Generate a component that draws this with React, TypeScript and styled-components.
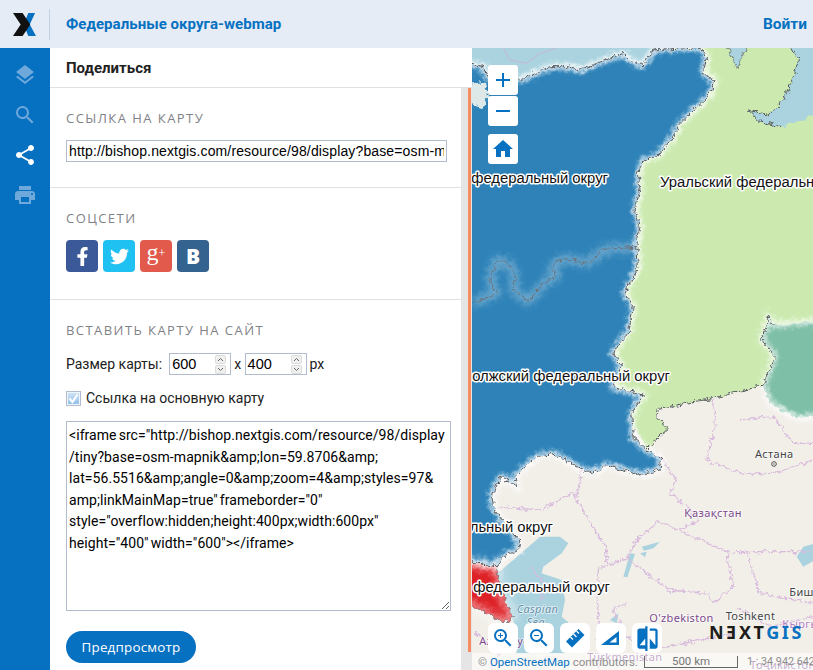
import styled, { createGlobalStyle } from 'styled-components';
import {
  MdAdd,
  MdCompare,
  MdHome,
  MdLayers,
  MdPrint,
  MdRemove,
  MdSearch,
  MdShare,
  MdZoomIn,
  MdZoomOut,
} from 'react-icons/md';
import { FaFacebookF, FaTwitter } from 'react-icons/fa';

const EMBED_CODE = [
  '<iframe src="http://bishop.nextgis.com/resource/98/display',
  '/tiny?base=osm-mapnik&amp;lon=59.8706&amp;',
  'lat=56.5516&amp;angle=0&amp;zoom=4&amp;styles=97&',
  'amp;linkMainMap=true" frameborder="0"',
  'style="overflow:hidden;height:400px;width:600px"',
  'height="400" width="600"></iframe>',
].join('\n');

const GlobalStyle = createGlobalStyle`
  html, body {
    margin: 0;
    padding: 0;
    height: 100%;
    overflow: hidden;
  }
  body {
    font-family: Roboto, "Liberation Sans", sans-serif;
    font-size: 14px;
    color: #212121;
  }
`;

const Page = styled.div`
  width: 813px;
  height: 670px;
  display: flex;
  flex-direction: column;
  overflow: hidden;
`;

const Header = styled.header`
  height: 48px;
  flex: none;
  display: flex;
  align-items: center;
  background: #e5ecf5;
`;

const LogoCell = styled.div`
  width: 49px;
  height: 31px;
  display: flex;
  align-items: center;
  justify-content: center;
  border-right: 1px solid #bcd3ea;
  box-sizing: content-box;
`;

const Title = styled.div`
  margin-left: 16px;
  font-size: 15px;
  font-weight: 700;
  letter-spacing: 0.05px;
  color: #0670c1;
  flex: 1;
`;

const Login = styled.a`
  margin-right: 6px;
  font-size: 15.5px;
  font-weight: 700;
  color: #0670c1;
`;

const Main = styled.div`
  flex: 1;
  display: flex;
  min-height: 0;
`;

const Nav = styled.nav`
  width: 50px;
  flex: none;
  background: #0670c1;
  display: flex;
  flex-direction: column;
  align-items: center;
  padding-top: 15px;
  gap: 16px;
  box-sizing: border-box;
`;

const NavIcon = styled.div<{ $active?: boolean }>`
  width: 24px;
  height: 24px;
  font-size: 24px;
  line-height: 0;
  color: ${(p) => (p.$active ? '#ffffff' : '#6fa9dc')};
`;

const Panel = styled.div`
  width: 422px;
  flex: none;
  display: flex;
  flex-direction: column;
  background: #fff;
`;

const PanelTitle = styled.div`
  height: 38px;
  flex: none;
  padding: 1px 0 0 16px;
  display: flex;
  align-items: center;
  font-size: 15px;
  font-weight: 700;
  color: #212121;
  border-bottom: 1px solid #e0e0e0;
`;

const PanelBody = styled.div`
  flex: 1;
  display: flex;
  min-height: 0;
`;

const Sections = styled.div`
  width: 411px;
  flex: none;
  overflow: hidden;
`;

const ScrollTrack = styled.div`
  width: 11px;
  flex: none;
  background: #e5e5e5;
  display: flex;
  justify-content: flex-end;
  padding-right: 1px;
  box-sizing: border-box;
`;

const ScrollThumb = styled.div`
  width: 3px;
  height: 564px;
  background: #f58c62;
`;

const Section = styled.section<{ $height: number }>`
  height: ${(p) => p.$height}px;
  box-sizing: border-box;
  padding: 22px 10px 0 16px;
  border-bottom: 1px solid #e0e0e0;

  &:last-child {
    border-bottom: none;
  }
`;

const SectionTitle = styled.h3`
  margin: 0 0 14px;
  font-family: 'Open Sans', sans-serif;
  font-size: 13px;
  line-height: 16px;
  font-weight: 400;
  letter-spacing: 1.45px;
  color: #7f8287;
`;

const LinkInput = styled.input`
  display: block;
  width: 381px;
  height: 22px;
  box-sizing: border-box;
  border: 1px solid #b3bbcf;
  padding: 0 2px;
  font-family: 'Liberation Sans', sans-serif;
  font-size: 14px;
  letter-spacing: 0.14px;
  color: #000;
  outline: none;
`;

const SocialRow = styled.div`
  display: flex;
  gap: 5px;
`;

const SocialButton = styled.a<{ $color: string }>`
  width: 32px;
  height: 32px;
  border-radius: 4px;
  background: ${(p) => p.$color};
  color: #fff;
  display: flex;
  align-items: center;
  justify-content: center;
  font-size: 19px;
`;

const GooglePlus = styled.span`
  font-family: 'Liberation Serif', serif;
  font-size: 24px;
  line-height: 24px;
  margin-top: -7px;

  small {
    font-size: 12px;
    vertical-align: 3px;
  }
`;

const VkLetter = styled.span`
  font-family: 'Open Sans', sans-serif;
  font-weight: 800;
  font-size: 21px;
`;

const SizeRow = styled.div`
  display: flex;
  align-items: center;
  height: 22px;
  margin-top: 15px;
  font-size: 14px;
`;

const SizeLabel = styled.span<{ $left?: number; $right?: number }>`
  margin: 0 ${(p) => p.$right || 0}px 0 ${(p) => p.$left || 0}px;
`;

const Spin = styled.div`
  width: 62px;
  height: 22px;
  box-sizing: border-box;
  border: 1px solid #b3bbcf;
  display: flex;
  align-items: center;
  justify-content: space-between;
  padding: 0 4px 0 2px;
  font-size: 14.5px;
  color: #000;
  font-family: 'Liberation Sans', sans-serif;
`;

const SpinButtons = styled.div`
  width: 11px;
  display: flex;
  flex-direction: column;
  gap: 1px;
`;

const SpinButton = styled.div`
  height: 9px;
  background: #f0f0f0;
  border: 1px solid #dcdcdc;
  box-sizing: border-box;
  border-radius: 2px;
  display: flex;
  align-items: center;
  justify-content: center;
`;

const CheckRow = styled.label`
  display: flex;
  align-items: center;
  gap: 5px;
  margin-top: 14px;
  height: 18px;
  font-size: 14px;
`;

const CheckBox = styled.span`
  width: 15px;
  height: 15px;
  box-sizing: border-box;
  border: 1px solid #b3bbcf;
  background: linear-gradient(#d3e5f6, #8fbee8);
  box-shadow: inset 0 0 0 1px #eef5fb;
  display: flex;
  align-items: center;
  justify-content: center;
`;

const CodeArea = styled.textarea`
  display: block;
  width: 385px;
  height: 190px;
  margin-top: 14px;
  box-sizing: border-box;
  border: 1px solid #b3bbcf;
  padding: 3px 2px;
  font-family: Roboto, sans-serif;
  font-size: 14px;
  line-height: 21.5px;
  letter-spacing: 0.06px;
  word-spacing: -1.5px;
  white-space: pre;
  color: #000;
  outline: none;
  overflow: hidden;
`;

const PreviewButton = styled.button`
  display: block;
  margin-top: 20px;
  width: 130px;
  height: 32px;
  border: none;
  border-radius: 16px;
  background: #0670c1;
  color: #fff;
  font-family: 'Open Sans', sans-serif;
  font-size: 13.4px;
  letter-spacing: 0.2px;
`;

const MapPane = styled.div`
  position: relative;
  flex: 1;
  overflow: hidden;
  background: #f2efe9;
`;

const MapCanvas = styled.svg`
  display: block;
  width: 341px;
  height: 622px;
`;

const RegionLabel = styled.text`
  font-family: 'Liberation Sans', sans-serif;
  font-size: 44.5px;
  fill: #111;
  stroke: #fff;
  stroke-width: 9px;
  stroke-linejoin: round;
  paint-order: stroke;
`;

const PlaceLabel = styled.text<{ $color?: string; $italic?: boolean }>`
  font-family: 'Noto Sans', sans-serif;
  font-size: 33px;
  font-style: ${(p) => (p.$italic ? 'italic' : 'normal')};
  fill: ${(p) => p.$color || '#444'};
  stroke: #ffffffb0;
  stroke-width: 5px;
  paint-order: stroke;
  letter-spacing: 1px;
`;

const ZoomStack = styled.div`
  position: absolute;
  left: 16px;
  top: 17px;
  display: flex;
  flex-direction: column;
  gap: 1px;
`;

const MapButton = styled.div<{ $spaced?: boolean }>`
  width: 30px;
  height: 30px;
  margin-top: ${(p) => (p.$spaced ? 7 : 0)}px;
  border-radius: 3px;
  background: #fff;
  color: #0670c1;
  display: flex;
  align-items: center;
  justify-content: center;
  font-size: 24px;
`;

const ToolBar = styled.div`
  position: absolute;
  left: 16px;
  top: 575px;
  display: flex;
  gap: 6px;
`;

const ToolButton = styled(MapButton)<{ $big?: boolean }>`
  border-radius: 6px;
  font-size: ${(p) => (p.$big ? 27 : 24)}px;
`;

const NextLogo = styled.div`
  position: absolute;
  right: 9px;
  top: 574px;
  font-family: 'Noto Sans', 'DejaVu Sans', sans-serif;
  font-weight: 700;
  font-size: 18px;
  line-height: 20px;
  letter-spacing: 2.6px;
  color: #1d1d1b;
  white-space: nowrap;

  span {
    color: #0670c1;
  }
`;

const BottomBar = styled.div`
  position: absolute;
  left: 0;
  right: 0;
  bottom: 0;
  height: 17px;
  padding-left: 6px;
  background: rgba(255, 255, 255, 0.55);
  display: flex;
  align-items: center;
  font-size: 11.5px;
  color: #8d8d8d;
  white-space: nowrap;
`;

const Attribution = styled.div`
  width: 166px;
  flex: none;

  a {
    color: #0670c1;
  }
`;

const ScaleBar = styled.div`
  width: 94px;
  height: 12px;
  flex: none;
  box-sizing: border-box;
  border: 1px solid #666;
  border-top: none;
  line-height: 11px;
  text-align: center;
  color: #777;
`;

const Ratio = styled.div`
  margin-left: 9px;
  font-size: 10.8px;
`;

type Pt = [number, number];

const pts = (list: Pt[]) => list.map((p) => p.join(',')).join(' ');

// map shapes, in 3x units of the reference (x from 96, y from 144)
const BLUE: Pt[] = [
  [60, 185], [130, 200], [145, 232], [240, 240], [330, 200], [385, 200], [420, 210], [470, 190],
  [550, 160], [575, 185], [610, 195], [640, 150], [780, 140], [800, 170], [790, 220], [825, 240],
  [810, 285], [720, 370], [700, 410], [650, 470], [610, 480], [595, 520], [600, 570], [585, 630],
  [600, 680], [590, 735], [595, 800], [555, 880], [580, 920], [565, 1000], [545, 1020], [520, 1060],
  [545, 1100], [520, 1160], [610, 1185], [575, 1240], [580, 1310], [620, 1350], [665, 1375],
  [660, 1410], [600, 1425], [500, 1395], [460, 1420], [420, 1405], [340, 1360], [290, 1370],
  [225, 1430], [230, 1460], [185, 1430], [155, 1485], [160, 1520], [200, 1580], [235, 1620],
  [240, 1645], [185, 1675], [170, 1700], [60, 1680],
];

const RED: Pt[] = [
  [60, 1680], [170, 1700], [185, 1780], [220, 1850], [190, 1870], [130, 1835], [60, 1800],
];

const GREEN: Pt[] = [
  [700, 130], [860, 130], [890, 205], [925, 130], [1045, 130], [1075, 180], [1060, 230],
  [1030, 300], [990, 345], [925, 330], [960, 365], [1020, 380], [1160, 335], [1160, 980],
  [1000, 975], [985, 950], [970, 1020], [1005, 1070], [970, 1155], [820, 1195], [655, 1225],
  [650, 1255], [685, 1285], [620, 1345], [560, 1240], [500, 1100], [500, 700],
];

const TEAL: Pt[] = [
  [1160, 960], [1000, 975], [985, 950], [965, 1020], [1005, 1070], [970, 1155], [990, 1210],
  [1070, 1255], [1160, 1245],
];

const INNER_LINE: Pt[] = [
  [590, 742], [490, 748], [470, 770], [440, 790], [370, 775], [335, 800], [350, 830], [310, 850],
  [265, 905], [220, 870], [225, 820], [205, 790], [170, 780], [150, 840], [170, 880], [100, 910],
];

const CASPIAN: Pt[] = [
  [185, 1710], [300, 1610], [360, 1610], [385, 1630], [365, 1660], [310, 1700], [305, 1720],
  [365, 1740], [375, 1800], [365, 1850], [400, 1880], [420, 1940], [390, 1960], [230, 1960],
  [225, 1880], [190, 1780], [170, 1720],
];

const LAKES: Pt[][] = [
  [[550, 1730], [570, 1660], [585, 1662], [562, 1732]],
  [[605, 1640], [660, 1625], [640, 1645], [612, 1652]],
  [[600, 1660], [620, 1655], [615, 1672]],
  [[1160, 1620], [1090, 1640], [1070, 1670], [1090, 1700], [1160, 1660]],
  [[510, 1860], [535, 1840], [530, 1870]],
];

const BORDERS: Pt[][] = [
  [[160, 1520], [300, 1530], [400, 1480], [470, 1600], [500, 1640], [500, 1690]],
  [[425, 1410], [410, 1490]],
  [[665, 1375], [710, 1440], [690, 1480], [740, 1520], [780, 1560], [715, 1590], [655, 1565], [590, 1620], [560, 1675]],
  [[820, 1195], [825, 1270], [800, 1380], [900, 1420], [1000, 1420], [1119, 1380]],
  [[900, 1260], [1000, 1250], [1060, 1330], [1119, 1330]],
  [[715, 1590], [860, 1655], [1119, 1655]],
  [[860, 1655], [880, 1760], [820, 1810], [800, 1780], [690, 1770], [560, 1675], [475, 1705], [475, 2010]],
  [[920, 1655], [960, 1780], [1119, 1810]],
  [[560, 1810], [520, 1830], [560, 1910], [640, 1950], [780, 1920], [880, 1900]],
  [[890, 1820], [990, 1880], [1119, 1850]],
  [[270, 1700], [320, 1760], [300, 1800]],
  [[100, 1890], [180, 1960], [150, 2010]],
];

const RegionMap = () => (
  <MapCanvas viewBox="96 144 1023 1866" aria-label="map">
    <defs>
      <filter id="jag" x="-5%" y="-5%" width="110%" height="110%">
        <feTurbulence type="fractalNoise" baseFrequency="0.07" numOctaves="3" seed="4" />
        <feDisplacementMap in="SourceGraphic" scale="22" xChannelSelector="R" yChannelSelector="G" />
      </filter>
      <filter id="soft" x="-5%" y="-5%" width="110%" height="110%">
        <feGaussianBlur stdDeviation="7" />
      </filter>
      <filter id="softer" x="-5%" y="-5%" width="110%" height="110%">
        <feGaussianBlur stdDeviation="13" />
      </filter>
    </defs>
    <rect x="60" y="130" width="1100" height="1900" fill="#f2efe9" />
    <rect x="60" y="130" width="1100" height="300" fill="#aad3df" />
    <polyline points="190,144 210,180 260,190 300,160 350,144" fill="none" stroke="#c6b6da" strokeWidth="3" />
    <polygon points={pts(CASPIAN)} fill="#aad3df" />
    {LAKES.map((l, i) => (
      <polygon key={i} points={pts(l)} fill="#aad3df" />
    ))}
    <g filter="url(#jag)">
      {BORDERS.map((b, i) => (
        <polyline key={i} points={pts(b)} fill="none" stroke="#d9bcdd" strokeWidth="4" />
      ))}
    </g>
    <g filter="url(#jag)">
      <polygon points={pts(GREEN)} fill="#cceab0" />
      <polygon points={pts(TEAL)} fill="#7ebfa7" />
      <polygon points={pts(BLUE)} fill="#2d82b8" />
      <polygon points={pts(RED)} fill="#dd2026" />
      <polygon points="60,255 135,245 145,290 130,325 60,300" fill="#dde9e8" />
      <g filter="url(#soft)">
        <polygon points={pts(BLUE)} fill="none" stroke="#ffffff" strokeOpacity="0.85" strokeWidth="18" />
        <polygon points={pts(TEAL)} fill="none" stroke="#ffffff" strokeOpacity="0.7" strokeWidth="18" />
      </g>
      <g filter="url(#softer)">
        <polygon points={pts(RED)} fill="none" stroke="#ffffff" strokeOpacity="0.7" strokeWidth="18" />
        <polyline points={pts(INNER_LINE)} fill="none" stroke="#ffffff" strokeOpacity="0.55" strokeWidth="14" />
      </g>
      <polygon points={pts(BLUE)} fill="none" stroke="#55585c" strokeWidth="3" />
      <polygon points={pts(RED)} fill="none" stroke="#55585c" strokeWidth="2" />
      <polyline points="655,1225 820,1195 970,1155 1005,1070 965,1020 985,950 1000,975" fill="none" stroke="#55585c" strokeWidth="3" />
      <polyline points="620,1345 685,1285 650,1255 655,1225" fill="none" stroke="#55585c" strokeWidth="3" />
      <polyline points="780,140 860,130 890,205 925,130" fill="none" stroke="#55585c" strokeWidth="2" />
      <polyline points="1045,130 1075,180 1060,230 1030,300 990,345 925,330 960,365 1020,380" fill="none" stroke="#55585c" strokeWidth="3" />
      <polyline points={pts(INNER_LINE)} fill="none" stroke="#6b7078" strokeWidth="3" />
    </g>

    <PlaceLabel x="945" y="1375">Астана</PlaceLabel>
    <circle cx="1002" cy="1392" r="7" fill="none" stroke="#555" strokeWidth="3" />
    <circle cx="1002" cy="1392" r="2" fill="#555" />
    <PlaceLabel x="733" y="1551" $color="#7c4a8c">Қазақстан</PlaceLabel>
    <PlaceLabel x="628" y="1866" $color="#7c4a8c">O'zbekiston</PlaceLabel>
    <PlaceLabel x="857" y="1860">Toshkent</PlaceLabel>
    <PlaceLabel x="1048" y="1788">Бишкек</PlaceLabel>
    <PlaceLabel x="1027" y="1884" $color="#b07cc0">Кыргызстан</PlaceLabel>
    <PlaceLabel x="230" y="1838" $color="#5f8fa8" $italic>Caspian</PlaceLabel>
    <PlaceLabel x="260" y="1878" $color="#5f8fa8" $italic>Sea</PlaceLabel>
    <PlaceLabel x="118" y="1935" $color="#7c4a8c">Azərbaycan</PlaceLabel>
    <PlaceLabel x="442" y="1982" $color="#7c4a8c">Türkmenistan</PlaceLabel>
    <PlaceLabel x="930" y="2006" $color="#7c4a8c">Тоҷикистон</PlaceLabel>

    <RegionLabel x="504" y="549" textAnchor="end">Северо-Западный федеральный округ</RegionLabel>
    <RegionLabel x="660" y="561">Уральский федеральный округ</RegionLabel>
    <RegionLabel x="690" y="1143" textAnchor="end">Приволжский федеральный округ</RegionLabel>
    <RegionLabel x="339" y="1596" textAnchor="end">Южный федеральный округ</RegionLabel>
    <RegionLabel x="510" y="1776" textAnchor="end">Северо-Кавказский федеральный округ</RegionLabel>
  </MapCanvas>
);

const Chevron = ({ up }: { up?: boolean }) => (
  <svg width="7" height="5" viewBox="0 0 7 5">
    <path d={up ? 'M1 4 L3.5 1.5 L6 4' : 'M1 1 L3.5 3.5 L6 1'} fill="none" stroke="#666" strokeWidth="1" />
  </svg>
);

const SizeSpin = ({ value }: { value: number }) => (
  <Spin>
    {value}
    <SpinButtons>
      <SpinButton><Chevron up /></SpinButton>
      <SpinButton><Chevron /></SpinButton>
    </SpinButtons>
  </Spin>
);

const App = () => {
  return (
    <Page>
      <GlobalStyle />
      <Header>
        <LogoCell>
          <svg width="23" height="23" viewBox="0 0 24 24">
            <polygon points="16,0 23,0 17.5,12 24,24 16,24 11,12" fill="#0670c1" />
            <polygon points="0,0 10,0 18,12 10,24 0,24 8,12" fill="#111" />
          </svg>
        </LogoCell>
        <Title>Федеральные округа-webmap</Title>
        <Login>Войти</Login>
      </Header>
      <Main>
        <Nav>
          <NavIcon><MdLayers /></NavIcon>
          <NavIcon><MdSearch /></NavIcon>
          <NavIcon $active><MdShare /></NavIcon>
          <NavIcon><MdPrint /></NavIcon>
        </Nav>
        <Panel>
          <PanelTitle>Поделиться</PanelTitle>
          <PanelBody>
            <Sections>
              <Section $height={100}>
                <SectionTitle>ССЫЛКА НА КАРТУ</SectionTitle>
                <LinkInput
                  readOnly
                  value="http://bishop.nextgis.com/resource/98/display?base=osm-mapnik&lon=59.8706"
                />
              </Section>
              <Section $height={112}>
                <SectionTitle>СОЦСЕТИ</SectionTitle>
                <SocialRow>
                  <SocialButton $color="#3b5998"><FaFacebookF /></SocialButton>
                  <SocialButton $color="#1fc1f3"><FaTwitter /></SocialButton>
                  <SocialButton $color="#e25a4c">
                    <GooglePlus>g<small>+</small></GooglePlus>
                  </SocialButton>
                  <SocialButton $color="#35638f"><VkLetter>В</VkLetter></SocialButton>
                </SocialRow>
              </Section>
              <Section $height={370}>
                <SectionTitle>ВСТАВИТЬ КАРТУ НА САЙТ</SectionTitle>
                <SizeRow>
                  <SizeLabel $right={7}>Размер карты:</SizeLabel>
                  <SizeSpin value={600} />
                  <SizeLabel $left={3} $right={3.5}>x</SizeLabel>
                  <SizeSpin value={400} />
                  <SizeLabel $left={3}>px</SizeLabel>
                </SizeRow>
                <CheckRow>
                  <CheckBox>
                    <svg width="11" height="11" viewBox="0 0 11 11">
                      <path d="M1.5 5.5 L4.5 9 L9.5 1.5" fill="none" stroke="#fff" strokeWidth="2" />
                    </svg>
                  </CheckBox>
                  Ссылка на основную карту
                </CheckRow>
                <CodeArea readOnly value={EMBED_CODE} />
                <PreviewButton>Предпросмотр</PreviewButton>
              </Section>
            </Sections>
            <ScrollTrack>
              <ScrollThumb />
            </ScrollTrack>
          </PanelBody>
        </Panel>
        <MapPane>
          <RegionMap />
          <ZoomStack>
            <MapButton><MdAdd /></MapButton>
            <MapButton><MdRemove /></MapButton>
            <MapButton $spaced><MdHome /></MapButton>
          </ZoomStack>
          <ToolBar>
            <ToolButton><MdZoomIn /></ToolButton>
            <ToolButton><MdZoomOut /></ToolButton>
            <ToolButton>
              <svg width="24" height="24" viewBox="0 0 24 24">
                <path fill="#0670c1" d="M3 15.5 L15.5 3 L21.5 9 L9 21.5 Z" />
                <path
                  stroke="#fff"
                  strokeWidth="1.3"
                  d="M7.5 11 L10 13.5 M10.5 8 L13.5 11 M13.5 5 L16 7.5"
                />
              </svg>
            </ToolButton>
            <ToolButton>
              <svg width="20" height="16" viewBox="0 0 20 16">
                <path
                  fillRule="evenodd"
                  fill="#0670c1"
                  d="M0 15 L18 1 L18 15 Z M8.5 12.5 L15.5 12.5 L15.5 7 Z"
                />
                <path stroke="#fff" strokeWidth="1" d="M5 11 L3.5 9 M9 8 L7.5 6 M13 5 L11.5 3" />
              </svg>
            </ToolButton>
            <ToolButton $big><MdCompare /></ToolButton>
          </ToolBar>
          <NextLogo>NƎXT<span>GIS</span></NextLogo>
          <BottomBar>
            <Attribution>© <a>OpenStreetMap</a> contributors.</Attribution>
            <ScaleBar>500 km</ScaleBar>
            <Ratio>1 : 34 942 642</Ratio>
          </BottomBar>
        </MapPane>
      </Main>
    </Page>
  );
};

export default App;
